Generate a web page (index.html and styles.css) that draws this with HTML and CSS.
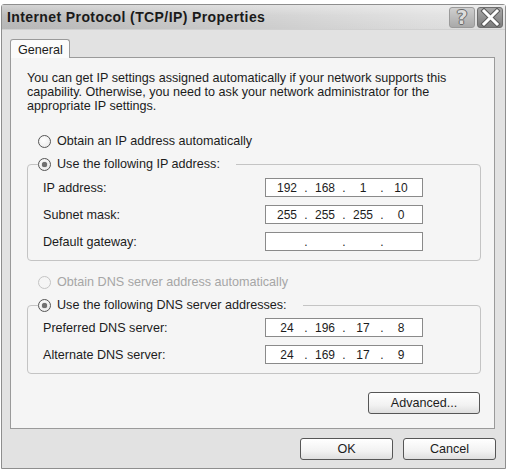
FILE: index.html
```html
<!DOCTYPE html>
<html>
<head>
<meta charset="utf-8">
<link rel="stylesheet" href="styles.css">
</head>
<body>
<div class="window">
  <div class="titlebar">
    <span class="title">Internet Protocol (TCP/IP) Properties</span>
    <div class="caption-btns">
      <span class="cbtn help">?</span>
      <span class="cbtn close">
        <svg width="23" height="19" viewBox="0 0 23 19">
          <path d="M5 3 L18 16 M18 3 L5 16" stroke="#5a5a5a" stroke-width="5" stroke-linecap="square" fill="none"/>
          <path d="M5 3 L18 16 M18 3 L5 16" stroke="#ffffff" stroke-width="3" stroke-linecap="square" fill="none"/>
        </svg>
      </span>
    </div>
  </div>
  <div class="client">
    <div class="tabs"><div class="tab">General</div></div>
    <div class="panel">
      <p class="intro">You can get IP settings assigned automatically if your network supports this<br>capability. Otherwise, you need to ask your network administrator for the<br>appropriate IP settings.</p>
      <div class="radio-row"><span class="radio"></span>Obtain an IP address automatically</div>
      <fieldset class="group">
        <legend class="radio-row"><span class="radio checked"></span>Use the following IP address:</legend>
        <div class="group-body first">
          <div class="field-row"><span class="label">IP address:</span><div class="ipbox"><span class="oct">192</span><span class="dot">.</span><span class="oct">168</span><span class="dot">.</span><span class="oct">1</span><span class="dot">.</span><span class="oct">10</span></div></div>
          <div class="field-row"><span class="label">Subnet mask:</span><div class="ipbox"><span class="oct">255</span><span class="dot">.</span><span class="oct">255</span><span class="dot">.</span><span class="oct">255</span><span class="dot">.</span><span class="oct">0</span></div></div>
          <div class="field-row"><span class="label">Default gateway:</span><div class="ipbox"><span class="oct"></span><span class="dot">.</span><span class="oct"></span><span class="dot">.</span><span class="oct"></span><span class="dot">.</span><span class="oct"></span></div></div>
        </div>
      </fieldset>
      <div class="radio-row disabled gap-top"><span class="radio"></span>Obtain DNS server address automatically</div>
      <fieldset class="group">
        <legend class="radio-row"><span class="radio checked"></span>Use the following DNS server addresses:</legend>
        <div class="group-body second">
          <div class="field-row"><span class="label">Preferred DNS server:</span><div class="ipbox"><span class="oct">24</span><span class="dot">.</span><span class="oct">196</span><span class="dot">.</span><span class="oct">17</span><span class="dot">.</span><span class="oct">8</span></div></div>
          <div class="field-row"><span class="label">Alternate DNS server:</span><div class="ipbox"><span class="oct">24</span><span class="dot">.</span><span class="oct">169</span><span class="dot">.</span><span class="oct">17</span><span class="dot">.</span><span class="oct">9</span></div></div>
        </div>
      </fieldset>
      <div class="adv-row"><button class="btn adv">Advanced...</button></div>
    </div>
    <div class="dlg-buttons">
      <button class="btn">OK</button>
      <button class="btn">Cancel</button>
    </div>
  </div>
</div>
</body>
</html>
```

FILE: styles.css
```css
* { box-sizing: border-box; }
html, body { margin: 0; padding: 0; background: #ffffff; }
body {
  font-family: "Liberation Sans", Arial, sans-serif;
  font-size: 12.6px;
  color: #1c1c1c;
}
.window {
  margin: 4px 0 0 1px;
  width: 505px;
  height: 465px;
  border: 1px solid #8e8e8e;
  border-radius: 3px 3px 0 0;
  background: #e2e2e2;
  display: flex;
  flex-direction: column;
}
.titlebar {
  height: 25px;
  display: flex;
  align-items: center;
  justify-content: space-between;
  padding: 0 2px 0 5px;
  background:
    linear-gradient(to bottom, rgba(255,255,255,0.35), rgba(255,255,255,0) 45%, rgba(0,0,0,0.03)),
    linear-gradient(to right, #bcbcbc, #cfcfcf 45%, #e2e2e2 85%, #e6e6e6);
  border-bottom: 1px solid #d0d0d0;
}
.title {
  font-family: "Liberation Sans", Arial, sans-serif;
  font-weight: bold;
  font-size: 14px;
  color: #1a1a1a;
  letter-spacing: 0.4px;
}
.caption-btns {
  display: flex;
  gap: 2px;
  align-items: center;
}
.cbtn {
  width: 26px;
  height: 21px;
  border-radius: 3px;
  display: flex;
  align-items: center;
  justify-content: center;
}
.help {
  background: linear-gradient(to bottom, #cfcfcf, #a9a9a9);
  border: 1px solid #9a9a9a;
  color: #dcdcdc;
  font-weight: bold;
  font-size: 19px;
  font-family: "DejaVu Sans", sans-serif;
  text-shadow: -1px 0 #6a6a6a, 1px 0 #6a6a6a, 0 -1px #6a6a6a, 0 1px #6a6a6a;
}
.close {
  background: linear-gradient(to bottom, #a8a8a8, #7c7c7c);
  border: 1px solid #6e6e6e;
}
.client {
  flex: 1;
  display: flex;
  flex-direction: column;
  padding: 9px 10px 0 8px;
}
.tabs {
  display: flex;
}
.tab {
  height: 19px;
  width: 60px;
  padding: 3px 0 0 7px;
  border: 1px solid #9a9a9a;
  border-bottom: none;
  border-radius: 3px 3px 0 0;
  background: #fbfbfb;
  margin-bottom: -1px;
  position: relative;
  z-index: 1;
  line-height: 14px;
}
.panel {
  height: 372px;
  border: 1px solid #9a9a9a;
  background: #f5f5f5;
  padding: 13px 13px 0 16px;
}
.intro {
  margin: 0;
  line-height: 14px;
  white-space: nowrap;
}
.radio-row {
  display: flex;
  align-items: center;
  height: 14px;
  line-height: 14px;
  margin-top: 21px;
  padding-left: 11px;
}
.radio-row.gap-top { margin-top: 14px; }
.radio {
  width: 13px;
  height: 13px;
  border-radius: 50%;
  border: 1px solid #555555;
  background: radial-gradient(circle at 40% 40%, #ffffff, #e6e6e6);
  margin-right: 6px;
  display: flex;
  align-items: center;
  justify-content: center;
  flex: none;
}
.radio.checked::after {
  content: "";
  width: 5px;
  height: 5px;
  border-radius: 50%;
  background: #707070;
  box-shadow: 0 0 1px #555;
}
.disabled { color: #a6a6a6; }
.disabled .radio { border-color: #c4c4c4; background: #f5f5f5; }
.group {
  margin: 9px 0 0 0;
  padding: 0;
  border: 1px solid #c4c4c4;
  border-radius: 4px;
  min-width: 0;
}
.group legend.radio-row {
  margin: 0 0 0 10px;
  padding: 0 16px 0 0;
}
.group-body {
  padding: 7px 0 9px 15px;
  display: flex;
  flex-direction: column;
  gap: 8px;
}
.group-body.second { padding-top: 6px; }
.field-row {
  display: grid;
  grid-template-columns: 222px 158px;
  align-items: center;
  height: 19px;
}
.ipbox {
  height: 19px;
  border: 1px solid #8a8a8a;
  background: #ffffff;
  display: flex;
  align-items: center;
  padding-left: 6px;
  font-size: 12px;
}
.oct {
  width: 30px;
  text-align: center;
}
.dot {
  width: 8px;
  text-align: center;
}
.adv-row {
  margin-top: 18px;
  display: flex;
  justify-content: flex-end;
  padding-right: 1px;
}
.btn {
  font-family: "Liberation Sans", Arial, sans-serif;
  font-size: 12.6px;
  color: #1c1c1c;
  height: 22px;
  width: 93px;
  border: 1px solid #565656;
  border-radius: 3px;
  background: linear-gradient(to bottom, #ffffff, #f2f2f2 60%, #dedede);
  padding: 0;
}
.btn.adv { width: 112px; }
.dlg-buttons {
  margin-top: 9px;
  display: flex;
  justify-content: flex-end;
  gap: 10px;
  margin-right: -1px;
}
```
